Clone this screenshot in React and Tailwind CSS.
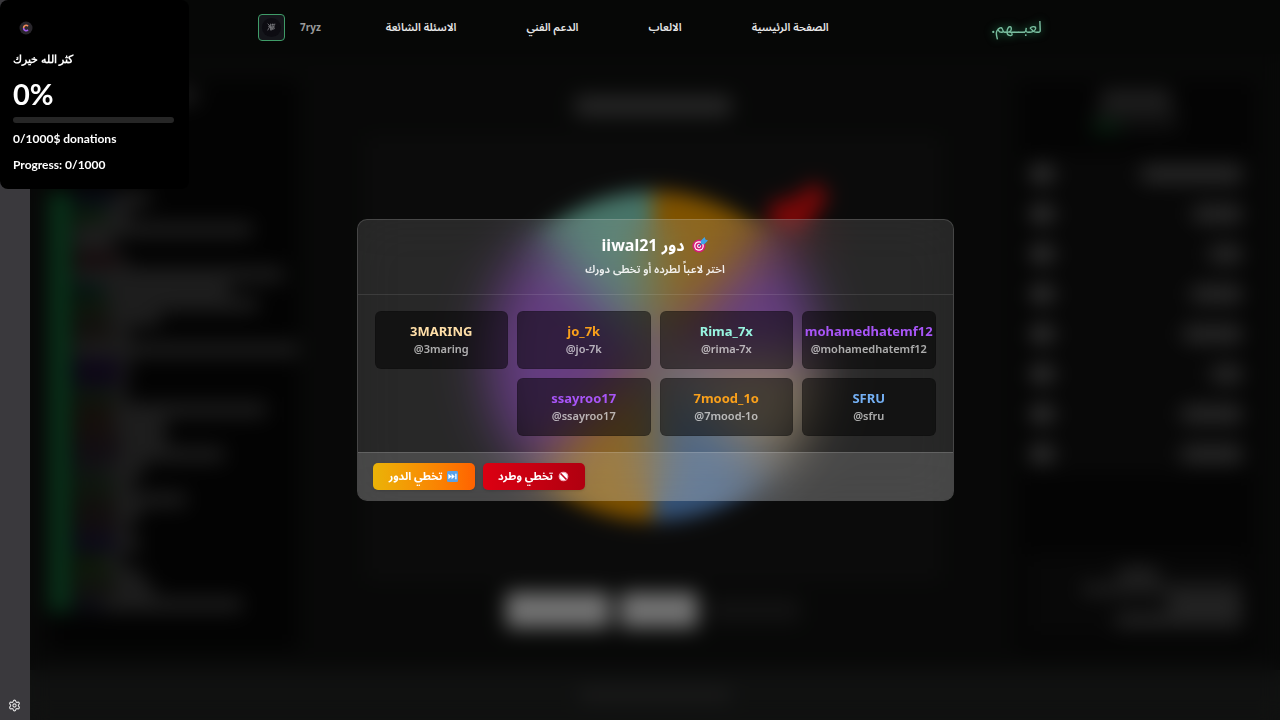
import { Settings } from 'lucide-react'

const navLinks = ['الصفحة الرئيسية', 'الالعاب', 'الدعم الفني', 'الاسئلة الشائعة']

const players = [
  { name: 'mohamedhatemf12', handle: '@mohamedhatemf12', color: 'text-[#a855f7]' },
  { name: 'Rima_7x', handle: '@rima-7x', color: 'text-[#98f5e1]' },
  { name: 'jo_7k', handle: '@jo-7k', color: 'text-[#f9a01b]' },
  { name: '3MARING', handle: '@3maring', color: 'text-[#ffdfa8]' },
  { name: 'SFRU', handle: '@sfru', color: 'text-[#74b0f4]' },
  { name: '7mood_1o', handle: '@7mood-1o', color: 'text-[#f9a01b]' },
  { name: 'ssayroo17', handle: '@ssayroo17', color: 'text-[#a855f7]' },
]

// [name width, name colour, message width]
const chatLines = [
  [40, '#141a30', 36], [32, '#143a14', 24], [0, '#000', 178], [0, '#000', 40],
  [44, '#2c1418', 8], [0, '#000', 210], [30, '#0a2c26', 126], [34, '#1c3018', 150],
  [36, '#24241c', 50], [40, '#2a2420', 16], [0, '#000', 228], [46, '#1c1030', 10],
  [46, '#1c1030', 8], [40, '#1c301c', 12], [40, '#282018', 152], [40, '#2c2018', 52],
  [44, '#281c20', 48], [44, '#241c28', 106], [36, '#242828', 34], [40, '#1c301c', 20],
  [40, '#24241c', 72], [42, '#241c1c', 24], [42, '#241c24', 14], [42, '#181238', 24],
  [34, '#1c3010', 14], [38, '#20301c', 30], [42, '#24241c', 38], [30, '#1c1c2c', 138],
]

const rosterWidths = [100, 48, 32, 50, 58, 30, 60, 60]

const slices = ['#ffa500', '#a045e0', '#ffdead', '#6ba6f0', '#ffa500', '#a045e0', '#a045e0', '#8ee8d0']

function slicePath(i) {
  const point = (deg) => {
    const a = ((deg - 90) * Math.PI) / 180
    return `${170 + 165 * Math.cos(a)} ${170 + 165 * Math.sin(a)}`
  }
  return `M170 170 L${point(i * 45)} A165 165 0 0 1 ${point(i * 45 + 45)} Z`
}

function DartIcon() {
  return (
    <svg viewBox="0 0 16 16" className="size-4" aria-hidden="true">
      <circle cx="7" cy="9" r="6.5" fill="#d81b7a" />
      <circle cx="7" cy="9" r="4.8" fill="#fff" />
      <circle cx="7" cy="9" r="3.6" fill="#d81b7a" />
      <circle cx="7" cy="9" r="2" fill="#fff" />
      <circle cx="7" cy="9" r="1" fill="#d81b7a" />
      <path d="M7 9 12 4" stroke="#1e6fb0" strokeWidth="1.2" />
      <path d="M9 7 8.800 3.800 12.600 0l.9 2.500 2.500.9-3.800 3.800Z" fill="#3fa4ea" />
    </svg>
  )
}

function SkipIcon() {
  return (
    <svg viewBox="0 0 12 12" className="size-[11px]" aria-hidden="true">
      <rect width="12" height="12" rx="1.5" fill="#5aa2e8" />
      <path d="M1.5 3 5 6 1.5 9ZM5 3l3.5 3L5 9ZM9 3h1.4v6H9Z" fill="#fff" />
    </svg>
  )
}

function BanIcon() {
  return (
    <svg viewBox="0 0 12 12" className="size-[11px]" aria-hidden="true">
      <circle cx="6" cy="6" r="4.7" fill="#fff" stroke="#f3a3b4" strokeWidth="1.2" />
      <path d="m2.8 2.8 6.4 6.4" stroke="#c4001d" strokeWidth="1.7" />
    </svg>
  )
}

function Header() {
  return (
    <header className="relative z-20 h-[54px] bg-[#060706] pr-[10px]">
      <div dir="rtl" className="mx-auto flex h-full max-w-[784px] items-center">
        <a href="#home" className="text-[17px] leading-6 text-[#79bd9f] drop-shadow-[0_0_4px_#1f7a50]">
          لعبــهم.
        </a>
        <nav className="ms-auto me-[65px] flex gap-[70px]">
          {navLinks.map((label) => (
            <a key={label} href="#nav" className="text-[11px] leading-4 font-semibold whitespace-nowrap text-[#e6e6e6]">
              {label}
            </a>
          ))}
        </nav>
        <a href="#profile" className="flex items-center gap-[15px]">
          <span className="text-[10px] font-bold text-[#9b9b9b]">7ryz</span>
          <span className="flex size-[27px] items-center justify-center rounded border border-[#3f9c68] bg-[#15161b]">
            <svg viewBox="0 0 24 24" className="size-[23px]" aria-hidden="true">
              <circle cx="12" cy="12" r="10" fill="#0d0c12" />
              <path
                d="m8 8 2.500 2.500L8 15M11 8v7M12 9l4-.5M11 11.500h4.500M13 8l-1 7M15 9l-2 5 2.500-1M8.500 10.500l5 3"
                stroke="#77777c"
                strokeWidth=".9"
                fill="none"
              />
            </svg>
          </span>
        </a>
      </div>
    </header>
  )
}

function Chat() {
  return (
    <section className="w-[250px] shrink-0 bg-[#060606]">
      <div className="mx-auto h-28 w-[70px] pt-2">
        <div className="h-4 w-[60px] bg-[#383838]" />
      </div>
      <div className="ms-[2px] border-s-[20px] border-[#126a36] ps-1">
        {chatLines.map(([nameWidth, color, width], i) => (
          <div key={i} className="flex h-[15px] items-center">
            <div className="h-[15px]" style={{ width: nameWidth, background: color }} />
            <div className="h-[13px] bg-[#424242]" style={{ width }} />
          </div>
        ))}
      </div>
    </section>
  )
}

function Wheel() {
  return (
    <section className="flex min-w-0 flex-1 flex-col items-center pe-2">
      <div className="mt-4 h-5 w-[156px] rounded bg-[#505050]" />
      <div className="mt-5 flex h-[445px] w-full max-w-[576px] justify-center bg-[#171717] pt-[50px]">
        <svg viewBox="0 0 340 340" className="size-[340px] overflow-visible" aria-hidden="true">
          {slices.map((fill, i) => (
            <path key={i} d={slicePath(i)} fill={fill} />
          ))}
          <path d="m286 18 28-8 18-14 14 14-14 20-12 26-16-2-18-14Z" fill="#f01010" />
        </svg>
      </div>
      <div className="mt-[10px] flex h-[38px] items-center gap-[10px]">
        <div className="h-9 w-[104px] rounded bg-[#e4e4e4]" />
        <div className="h-9 w-[78px] rounded bg-[#e4e4e4]" />
        <div className="h-6 w-[92px] rounded bg-[#242424]" />
      </div>
    </section>
  )
}

function Roster() {
  return (
    <section className="flex w-[240px] shrink-0 flex-col bg-[#080808] px-[10px]">
      <div className="mt-[10px] flex flex-col items-center gap-[3px]">
        <div className="h-4 w-[70px] bg-[#444]" />
        <div className="h-[10px] w-20 bg-[#383838]" />
        <div className="flex h-[10px] w-[88px]">
          <div className="w-7 bg-[#0c4a20]" />
          <div className="flex-1 bg-[#1c1c1c]" />
        </div>
      </div>
      <div className="mt-6 flex flex-col gap-1">
        {rosterWidths.map((width, i) => (
          <div key={i} className="flex h-9 items-center justify-between bg-[#111] px-1">
            <div className="h-4 w-6 rounded-full bg-[#747474]" />
            <div className="h-4 bg-[#585858]" style={{ width }} />
          </div>
        ))}
      </div>
      <div className="mt-auto mb-3 flex h-[84px] flex-col items-end gap-1 bg-[#101010] px-1 pt-[14px]">
        <div className="me-[84px] h-3 w-10 bg-[#4c4c4c]" />
        <div className="h-[10px] w-40 bg-[#484848]" />
        <div className="h-3 w-[74px] bg-[#585858]" />
        <div className="h-3 w-[126px] bg-[#505050]" />
      </div>
    </section>
  )
}

function DonationWidget() {
  return (
    <aside className="absolute top-0 left-0 z-30 h-[189px] w-[189px] rounded-lg bg-black px-[13px] pt-[21px] font-['Lato','Noto_Sans',sans-serif] text-white">
      <svg viewBox="0 0 14 14" className="ms-[6px] size-[14px]" aria-hidden="true">
        <circle cx="7" cy="7" r="6.500" fill="#29262c" />
        <path d="M9 5.200A2.500 2.500 0 0 0 4.600 7" stroke="#f08a5a" strokeWidth="1.600" fill="none" />
        <path d="M4.600 7A2.500 2.500 0 0 0 9 8.800" stroke="#a45cf0" strokeWidth="1.600" fill="none" />
      </svg>
      <p className="mt-4 text-[11px] leading-4 font-semibold">كثر الله خيرك</p>
      <p className="mt-[10px] text-[29px] leading-[34px] font-bold">0%</p>
      <div className="mt-[6px] h-[6px] w-[161px] rounded-full bg-[#262626]" />
      <p className="mt-2 text-[12px] leading-4 font-bold">0/1000$ donations</p>
      <p className="mt-[10px] text-[12px] leading-4 font-bold">Progress: 0/1000</p>
    </aside>
  )
}

function TurnDialog() {
  return (
    <div
      role="dialog"
      aria-labelledby="turn-title"
      dir="rtl"
      className="w-full max-w-[597px] overflow-hidden rounded-[10px] border border-white/15 bg-white/12 text-center text-white backdrop-blur-xl"
    >
      <div className="h-[75px] border-b border-white/10 pt-[13px]">
        <h2 id="turn-title" className="flex items-center justify-center gap-2 text-[16px] leading-6 font-bold">
          <DartIcon />
          <span>دور iiwal21</span>
        </h2>
        <p className="mt-1 text-[11px] leading-4 font-semibold text-white/90">اختر لاعباً لطرده أو تخطى دورك</p>
      </div>

      <div className="grid grid-cols-4 gap-[9px] px-[17px] py-4">
        {players.map((p) => (
          <button
            key={p.name}
            type="button"
            dir="ltr"
            className="flex h-[58px] min-w-0 flex-col items-center rounded-md border border-black/10 bg-black/50 pt-[10px]"
          >
            <span className={`text-[13px] leading-[18px] font-bold ${p.color}`}>{p.name}</span>
            <span className="text-[11px] leading-[18px] font-semibold text-white/65">{p.handle}</span>
          </button>
        ))}
      </div>

      <div className="flex h-12 items-center justify-end gap-2 border-t border-white/15 bg-white/15 px-[15px]">
        <button
          type="button"
          className="flex h-[27px] w-[102px] items-center justify-center gap-[5px] rounded-[5px] bg-linear-to-r from-[#dc0012] to-[#b00010] text-[11px] font-bold shadow"
        >
          <BanIcon />
          تخطي وطرد
        </button>
        <button
          type="button"
          className="flex h-[27px] w-[102px] items-center justify-center gap-[5px] rounded-[5px] bg-linear-to-r from-[#eab308] to-[#ff6200] text-[11px] font-bold shadow"
        >
          <SkipIcon />
          تخطي الدور
        </button>
      </div>
    </div>
  )
}

function App() {
  return (
    <div className="relative flex min-h-screen bg-[#0c0d0c] font-['Noto_Sans','Noto_Sans_Arabic','DejaVu_Sans',sans-serif]">
      <div className="flex w-[30px] shrink-0 items-end justify-start bg-[#3a393d] ps-2 pb-2">
        <button type="button" aria-label="Settings" className="text-[#e4e4e4]">
          <Settings size={13} strokeWidth={2} />
        </button>
      </div>

      <main className="relative flex min-w-0 flex-1 flex-col overflow-hidden">
        <Header />
        <div className="flex min-h-[586px] flex-1 justify-between bg-[#101110] ps-[18px] pe-6 pt-[26px] pb-5">
          <Chat />
          <Wheel />
          <Roster />
        </div>
        <footer className="flex h-[50px] items-center justify-center bg-[#202221]">
          <div className="h-3 w-[150px] bg-[#383838]" />
        </footer>

        <div className="absolute inset-0 z-10 bg-black/50 backdrop-blur-[10px]" />
        <div className="pointer-events-none absolute inset-0 z-20 flex items-center justify-center *:pointer-events-auto">
          <TurnDialog />
        </div>
      </main>

      <DonationWidget />
    </div>
  )
}

export default App
